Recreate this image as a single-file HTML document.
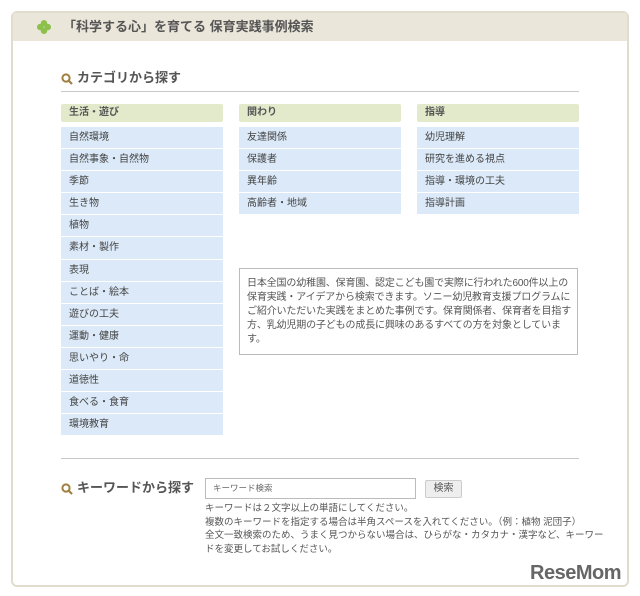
<!DOCTYPE html><html><head><meta charset="utf-8"><style>
*{margin:0;padding:0;box-sizing:border-box}
body{width:640px;height:596px;background:#fff;font-family:"Liberation Sans","Noto Sans CJK JP",sans-serif;color:#444;position:relative;overflow:hidden}
.frame{position:absolute;left:11px;top:11px;width:618px;height:576px;border:2px solid #e2dccf;border-radius:6px;background:#fff}
.hd{position:absolute;left:0;top:0;width:614px;height:28px;background:#ebe6da;font-size:13px;font-weight:bold;color:#555;line-height:28px;padding-left:50px}
.clover{position:absolute;left:24px;top:7px;width:14px;height:14px}
.abs{position:absolute}
.h2{font-size:13px;font-weight:bold;color:#555}
.rule{position:absolute;left:61px;width:518px;height:1px;background:#c8c8c8}
.col{position:absolute;top:104px;width:162px}
.ch{height:18px;background:#e3eacb;border-radius:2px;font-size:10px;font-weight:bold;color:#555;line-height:18px;padding-left:8px;margin-bottom:5px}
.it{height:22.1px;background:#dbe9f8;border-bottom:1px solid #fff;font-size:10px;color:#444;line-height:22px;padding-left:8px}
.box{position:absolute;left:239px;top:268px;width:339px;height:87px;border:1px solid #bbb;font-size:10px;line-height:14px;padding:8px 5px 8px 7px;color:#555;letter-spacing:-0.15px}
.inp{position:absolute;left:205px;top:478px;width:211px;height:21px;border:1px solid #bbb;font-size:8.5px;color:#666;line-height:19px;padding-left:7px}
.btn{position:absolute;left:425px;top:480px;width:37px;height:18px;border:1px solid #ccc;background:#eee;border-radius:2px;font-size:10px;line-height:16px;text-align:center;color:#555}
.help{position:absolute;left:205px;top:502px;font-size:9.5px;line-height:13.7px;color:#555}
.mag{display:inline-block;vertical-align:middle;margin-right:4px}
</style></head><body>
<div class="frame"><div class="hd">
<svg class="clover" viewBox="0 0 12 12"><circle cx="6" cy="2.8" r="2.8" fill="#8cc04a"/><circle cx="6" cy="9.2" r="2.8" fill="#8cc04a"/><circle cx="2.8" cy="6" r="2.8" fill="#8cc04a"/><circle cx="9.2" cy="6" r="2.8" fill="#8cc04a"/></svg>「科学する心」を育てる 保育実践事例検索</div></div>
<div class="abs h2" style="left:61px;top:67px"><svg class="mag" width="12" height="12" viewBox="0 0 12 12"><circle cx="5" cy="5" r="3.6" fill="none" stroke="#a08040" stroke-width="2"/><path d="M7.5 7.5L11 11" stroke="#a08040" stroke-width="2.2"/></svg>カテゴリから探す</div>
<div class="rule" style="top:91px"></div>
<div class="col" style="left:61px"><div class="ch">生活・遊び</div>
<div class="it">自然環境</div><div class="it">自然事象・自然物</div><div class="it">季節</div><div class="it">生き物</div><div class="it">植物</div><div class="it">素材・製作</div><div class="it">表現</div><div class="it">ことば・絵本</div><div class="it">遊びの工夫</div><div class="it">運動・健康</div><div class="it">思いやり・命</div><div class="it">道徳性</div><div class="it">食べる・食育</div><div class="it">環境教育</div></div>
<div class="col" style="left:239px"><div class="ch">関わり</div>
<div class="it">友達関係</div><div class="it">保護者</div><div class="it">異年齢</div><div class="it">高齢者・地域</div></div>
<div class="col" style="left:417px"><div class="ch">指導</div>
<div class="it">幼児理解</div><div class="it">研究を進める視点</div><div class="it">指導・環境の工夫</div><div class="it">指導計画</div></div>
<div class="box">日本全国の幼稚園、保育園、認定こども園で実際に行われた600件以上の<br>保育実践・アイデアから検索できます。ソニー幼児教育支援プログラムに<br>ご紹介いただいた実践をまとめた事例です。保育関係者、保育者を目指す<br>方、乳幼児期の子どもの成長に興味のあるすべての方を対象としていま<br>す。</div>
<div class="rule" style="top:458px"></div>
<div class="abs h2" style="left:61px;top:477px"><svg class="mag" width="12" height="12" viewBox="0 0 12 12"><circle cx="5" cy="5" r="3.6" fill="none" stroke="#a08040" stroke-width="2"/><path d="M7.5 7.5L11 11" stroke="#a08040" stroke-width="2.2"/></svg>キーワードから探す</div>
<div class="inp">キーワード検索</div><div class="btn">検索</div>
<div class="help">キーワードは２文字以上の単語にしてください。<br>複数のキーワードを指定する場合は半角スペースを入れてください。（例：植物 泥団子）<br>全文一致検索のため、うまく見つからない場合は、ひらがな・カタカナ・漢字など、キーワー<br>ドを変更してお試しください。</div>
<div class="abs" style="left:530px;top:562px;font-size:20px;font-weight:bold;color:#666;letter-spacing:-0.5px">ReseMom</div>
</body></html>
